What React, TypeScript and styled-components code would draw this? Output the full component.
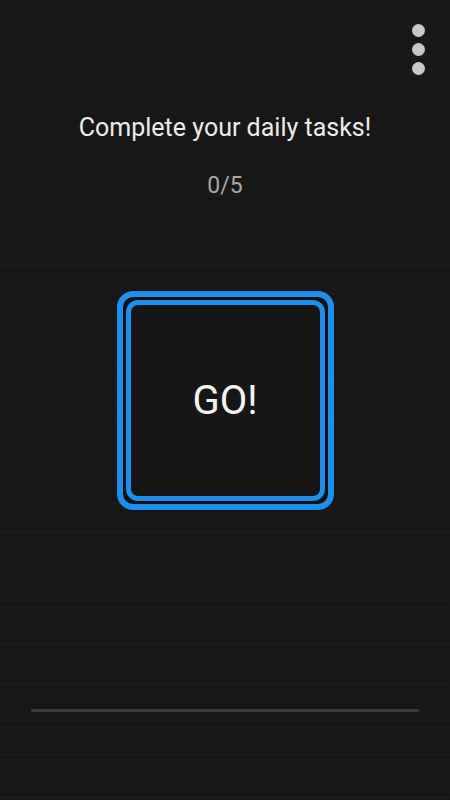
import React from 'react';
import styled, { createGlobalStyle } from 'styled-components';

const GlobalStyle = createGlobalStyle`
  html, body {
    margin: 0;
    padding: 0;
    background: #171717;
  }
  * { box-sizing: border-box; }
`;

const Page = styled.main`
  width: 450px;
  height: 800px;
  display: flex;
  flex-direction: column;
  align-items: center;
  background-color: #171717;
  background-image:
    repeating-linear-gradient(180deg, transparent 0 13px, rgba(255, 255, 255, 0.025) 13px 14px),
    repeating-linear-gradient(180deg, transparent 0 37px, rgba(255, 255, 255, 0.02) 37px 38px);
  font-family: Roboto, 'Noto Sans', sans-serif;
  overflow: hidden;
`;

const TopBar = styled.header`
  width: 100%;
  display: flex;
  justify-content: flex-end;
  padding: 24px 25px 0 0;
`;

const MenuButton = styled.button`
  display: flex;
  flex-direction: column;
  gap: 6px;
  padding: 0;
  border: none;
  background: none;
  cursor: pointer;
`;

const Dot = styled.span`
  width: 13px;
  height: 13px;
  border-radius: 50%;
  background: #c8c8c8;
`;

const Title = styled.h1`
  margin: 39px 0 0;
  font-size: 25px;
  line-height: 28px;
  font-weight: 400;
  color: #ececec;
`;

const Count = styled.div`
  margin-top: 31px;
  font-size: 23px;
  line-height: 26px;
  color: #a8a8a8;
`;

const GoOuter = styled.button`
  margin-top: 92px;
  width: 217px;
  height: 219px;
  padding: 3px;
  border: 6px solid #1c8ff0;
  border-radius: 16px;
  background: #121212;
  cursor: pointer;
`;

const GoInner = styled.div`
  width: 100%;
  height: 100%;
  border: 5px solid #1c8ff0;
  border-radius: 12px;
  background: #161616;
  display: flex;
  align-items: center;
  justify-content: center;
  font-family: Roboto, 'Noto Sans', sans-serif;
  font-size: 40px;
  color: #f4f4f4;
`;

const ProgressTrack = styled.div`
  margin-top: auto;
  margin-bottom: 88px;
  width: 388px;
  height: 3px;
  background: #3a3a3a;
`;

export default function App() {
  return (
    <>
      <GlobalStyle />
      <Page>
        <TopBar>
          <MenuButton aria-label="Menu">
            <Dot />
            <Dot />
            <Dot />
          </MenuButton>
        </TopBar>
        <Title>Complete your daily tasks!</Title>
        <Count>0/5</Count>
        <GoOuter>
          <GoInner>GO!</GoInner>
        </GoOuter>
        <ProgressTrack />
      </Page>
    </>
  );
}
